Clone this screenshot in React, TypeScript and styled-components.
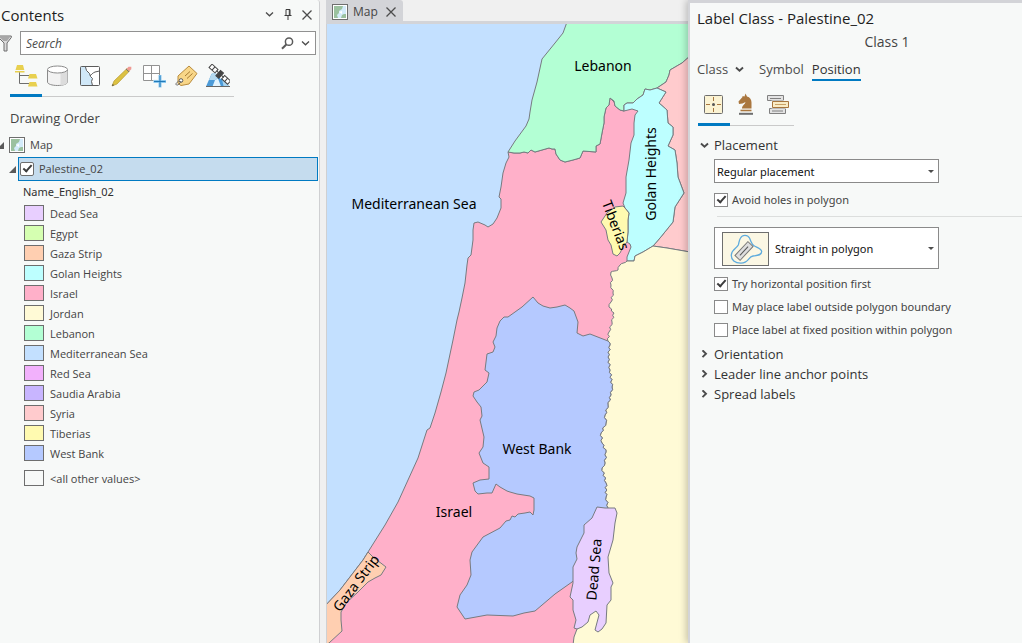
import React from "react";
import styled, { createGlobalStyle } from "styled-components";

const ui = '"Open Sans", "Noto Sans", sans-serif';
const uiWide = '"Noto Sans", "Open Sans", sans-serif';

const GlobalStyle = createGlobalStyle`
  *, *::before, *::after { box-sizing: border-box; }
  body { margin: 0; background: #f0f0f0; color: #444; font-family: ${ui}; font-size: 11px; line-height: 16px; }
  button, input, select { font: inherit; color: inherit; }
  button { margin: 0; padding: 0; border: 0; background: none; }
  svg { display: block; flex: none; }
  ul { margin: 0; padding: 0; list-style: none; }
`;

const Workspace = styled.div`
  display: grid;
  grid-template-columns: 320px minmax(0, 1fr) 334px;
  min-height: 100vh;
`;

/* ---------- contents pane ---------- */

const ContentsPane = styled.aside`
  background: #f7f9f8;
  border-right: 1px solid #cfd0d2;
  border-top-right-radius: 3px;
`;

const PaneHeader = styled.header`
  display: flex;
  align-items: center;
  height: 31px;
  padding: 0 6px 2px 1px;
  gap: 7px;
`;

const PaneTitle = styled.h1`
  flex: 1;
  margin: 0;
  color: #1e1e1e;
  font-size: 15px;
  font-weight: 400;
  line-height: 20px;
`;

const IconButton = styled.button`
  display: grid;
  place-items: center;
  width: 12px;
  height: 20px;
`;

const SearchRow = styled.div`
  display: flex;
  align-items: center;
  gap: 8px;
  padding-right: 3px;
`;

const SearchBox = styled.div`
  display: flex;
  flex: 1;
  align-items: center;
  gap: 6px;
  height: 24px;
  padding: 0 4px 0 5px;
  border: 1px solid #919191;
  background: #fff;
`;

const SearchInput = styled.input`
  flex: 1;
  min-width: 0;
  padding: 1px 0 0;
  border: 0;
  outline: 0;
  background: none;
  font-size: 12px;
  &::placeholder { color: #4c4c4c; font-style: italic; opacity: 1; }
`;

const IconTabs = styled.div<{ $top: number }>`
  display: flex;
  width: max-content;
  margin-top: ${(p) => p.$top}px;
`;

const IconTab = styled.button<{ $active?: boolean }>`
  display: grid;
  place-items: center;
  width: 32px;
  height: 35px;
  padding-bottom: 7px;
  box-shadow: inset 0 ${(p) => (p.$active ? "-3px #007ac2" : "-1px #cacaca")};
`;

const GroupTitle = styled.h2`
  margin: 0;
  padding: 11px 10px 6px;
  font-size: 13px;
  font-weight: 400;
  line-height: 20px;
`;

const TreeRow = styled.div`
  display: flex;
  align-items: center;
  gap: 5px;
  height: 23px;
  padding-bottom: 1px;
`;

const Toggle = styled.button`
  width: 4px;
  height: 12px;
  overflow: hidden;
  display: flex;
  justify-content: flex-end;
  align-items: center;
`;

const LayerRow = styled.div`
  display: flex;
  align-items: center;
  gap: 2px;
  padding: 0 1px 0 9px;
`;

const LayerToggle = styled(Toggle)`
  width: 7px;
`;

const SelectedLayer = styled.label`
  display: flex;
  flex: 1;
  align-items: center;
  gap: 5px;
  height: 24px;
  padding-left: 1px;
  border: 1px solid #007ac2;
  background: #c5dcee;
`;

const Check = styled.input<{ $round?: boolean }>`
  appearance: none;
  flex: none;
  width: 14px;
  height: 14px;
  margin: 0;
  border: 1px solid ${(p) => (p.$round ? "#6e6e6e" : "#8a8a8a")};
  border-radius: ${(p) => (p.$round ? 2 : 0)}px;
  background: #fff;
  &:checked::after {
    content: "";
    display: block;
    width: 9px;
    height: 5px;
    margin: 2px 0 0 2px;
    border: solid #3c3c3c;
    border-width: 0 0 2px 2px;
    transform: rotate(-48deg);
  }
`;

const FieldName = styled.h3`
  margin: 0;
  padding: 3px 23px;
  color: #2f2f2f;
  font-family: ${uiWide};
  font-size: 11px;
  font-weight: 400;
  line-height: 16px;
`;

const Legend = styled.ul`
  padding-left: 24px;
`;

const LegendItem = styled.li<{ $spaced?: boolean }>`
  display: flex;
  align-items: center;
  gap: 6px;
  height: 20px;
  margin-top: ${(p) => (p.$spaced ? 5 : 0)}px;
`;

const LegendName = styled.span`
  padding-top: 2px;
`;

const Swatch = styled.span<{ $color: string }>`
  width: 20px;
  height: 16px;
  border: 1px solid #6e6e6e;
  background: ${(p) => p.$color};
`;

/* ---------- map view ---------- */

const MapView = styled.main`
  display: flex;
  flex-direction: column;
  min-width: 0;
  padding-left: 6px;
`;

const MapTabs = styled.div`
  display: flex;
  height: 24px;
  border-bottom: 3px solid #d3d4d8;
`;

const MapTab = styled.div`
  display: flex;
  align-items: center;
  gap: 5px;
  height: 24px;
  padding: 0 6px;
  border-radius: 0 3px 0 0;
  background: #d3d4d8;
  font-size: 12px;
`;

const TabLabel = styled.span`
  padding-right: 2px;
`;

const MapFrame = styled.div`
  flex: 1;
  border-left: 1px solid #cfd0d2;
  svg { width: 100%; height: 100%; }
`;

/* ---------- label class pane ---------- */

const LabelPane = styled.aside`
  position: relative;
  border-top: 3px solid #d3d4d8;
  border-left: 2px solid #d3d4d8;
  background: #f7f9f8;
  box-shadow: -2px 0 7px rgba(0, 0, 0, 0.22);
`;

const LabelTitle = styled.h1`
  margin: 0;
  padding: 5px 7px 4px;
  color: #1e1e1e;
  font-size: 15px;
  font-weight: 400;
  line-height: 20px;
`;

const ClassName = styled.p`
  margin: 0;
  padding-left: 62px;
  font-size: 14px;
  line-height: 20px;
  text-align: center;
`;

const Tabs = styled.nav`
  display: flex;
  gap: 8px;
  padding: 7px 7px 0;
`;

const Tab = styled.button<{ $active?: boolean }>`
  display: flex;
  align-items: center;
  gap: 7px;
  height: 22px;
  border-bottom: 2px solid ${(p) => (p.$active ? "#007ac2" : "transparent")};
  color: ${(p) => (p.$active ? "#333" : "#4c4c4c")};
  font-size: 13px;
  font-weight: ${(p) => (p.$active ? 500 : 400)};
`;

const TabGroup = styled.div`
  display: flex;
  padding-right: 7px;
`;

const Section = styled.section`
  display: flex;
  flex-direction: column;
  padding-top: 9px;
`;

const SectionButton = styled.button`
  display: flex;
  align-items: center;
  gap: 5px;
  height: 20px;
  padding-left: 10px;
  color: #333;
  font-size: 13px;
  font-weight: 500;
`;

const Fields = styled.div`
  display: flex;
  flex-direction: column;
  padding: 4px 0 3px 24px;
`;

const SelectBox = styled.div<{ $tall?: boolean }>`
  position: relative;
  width: 225px;
  height: ${(p) => (p.$tall ? 42 : 24)}px;
  margin: ${(p) => (p.$tall ? "10px 0 3px" : "0 0 5px")};
`;

const Select = styled.select<{ $inset: number }>`
  appearance: none;
  width: 100%;
  height: 100%;
  padding: 1px 16px 0 ${(p) => p.$inset}px;
  border: 1px solid #8a8a8a;
  border-radius: 0;
  background: #fff;
  color: #111;
  font-family: ${uiWide};
  font-size: 11px;
`;

const Caret = styled.span`
  position: absolute;
  top: 50%;
  right: 5px;
  margin-top: -1px;
  border: solid transparent;
  border-width: 3px 3px 0;
  border-top-color: #4c4c4c;
  pointer-events: none;
`;

const Preview = styled.span`
  position: absolute;
  top: 5px;
  left: 8px;
  pointer-events: none;
`;

const Option = styled.label`
  display: flex;
  align-items: center;
  gap: 4px;
  height: 23px;
  font-family: ${uiWide};
`;

const Rule = styled.hr`
  width: calc(100% - 3px);
  margin: 5px 0 0 3px;
  border: 0;
  border-top: 1px solid #dcdedd;
`;

/* ---------- icons ---------- */

const CloseIcon = () => (
  <svg width="10" height="10" viewBox="0 0 10 10" stroke="#4c4c4c" strokeWidth="1.3">
    <path d="M.5.5l9 9M9.5.5l-9 9" />
  </svg>
);

const Chevron = ({ right, bold }: { right?: boolean; bold?: boolean }) => (
  <svg width="9" height="9" viewBox="0 0 9 9" fill="none" stroke="#4c4c4c" strokeWidth={bold ? 1.9 : 1.3}>
    <path d={right ? "M2.5.3L6 3.7 2.5 7.1" : "M1 2.5l3.5 3.3L8 2.5"} />
  </svg>
);

const Triangle = () => (
  <svg width="7" height="7" viewBox="0 0 7 7" fill="#5a5a5a">
    <path d="M7 0v7H0z" />
  </svg>
);

const MapIcon = () => (
  <svg width="16" height="16" viewBox="0 0 16 16">
    <rect x=".5" y=".5" width="15" height="15" fill="#fff" stroke="#6e6e6e" />
    <rect x="2" y="2" width="12" height="12" fill="#9bc19f" />
    <path d="M11 2h3v8h-2l-2 1-1 3H6l-1-3 2-2V7l3-2z" fill="#d3ebfa" />
    <path d="M7 8l3-1v3z" fill="#fff" />
  </svg>
);

const FilterIcon = () => (
  <svg width="12" height="17" viewBox="0 0 12 17">
    <path d="M-2 1h13.300v1.500L7 8v8H4V8L-1.500 2.500z" fill="#dcdcdc" stroke="#6e6e6e" />
    <path d="M-1 1.500h11.500L7 6H3.500z" fill="#a8a8a8" />
  </svg>
);

const SearchIcon = () => (
  <svg width="13" height="13" viewBox="0 0 13 13" fill="none" stroke="#5a5a5a">
    <circle cx="8" cy="4.700" r="3.600" strokeWidth="1.500" />
    <path d="M5.300 7.500L1 11.800" strokeWidth="2" />
  </svg>
);

const PinIcon = () => (
  <svg width="8" height="11" viewBox="0 0 8 11" fill="none" stroke="#3c3c3c">
    <path d="M2 6V.5h4V6M.5 6.500h7M4 7v4M5.300 1v5" />
  </svg>
);

const listIcons = [
  {
    name: "List by drawing order",
    art: (
      <>
        <path d="M5.500 8v11.500H15M5.500 11.500H15" fill="none" stroke="#6e6e6e" />
        <g fill="#e8d04f">
          <path d="M3 1h6l1.300 5H1.500zM1 7h9.500v1.500H1z" />
          <path d="M15.500 10h6.500l1.500 4.500H14zM15.500 18h6.500l1.500 4.500H14z" />
        </g>
      </>
    ),
  },
  {
    name: "List by data source",
    art: (
      <g stroke="#8a8a8a">
        <path d="M1.500 6v12c0 2 4.500 3.500 10 3.500s10-1.500 10-3.500V6" fill="#f2f2f2" />
        <path d="M14.500 9c4-.5 7-1.500 7-3v12c0 2-3 3-7 3.500z" fill="#dcdcdc" stroke="none" />
        <ellipse cx="11.500" cy="5.500" rx="10" ry="3.500" fill="#fff" />
      </g>
    ),
  },
  {
    name: "List by selection",
    art: (
      <>
        <rect x="2.500" y="2.500" width="19" height="19" fill="#fff" />
        <path d="M2.500 2.500h5l1 4 3 3 1 3 2 2-1 3 1 4h-12z" fill="#d0e8f8" />
        <path d="M7.500 3l1 3.500 3 3 1 3 2 2-1 3 1 4M12 12c1.500-1.500 2.500-3 5-4l4.500-1" fill="none" stroke="#5c5c5c" />
        <rect x="2.500" y="2.500" width="19" height="19" rx="1" fill="none" stroke="#5c5c5c" />
      </>
    ),
  },
  {
    name: "List by editing",
    art: (
      <>
        <path d="M2 22l2-5L17 4.500l2.500 2.500L7 20z" fill="#dcc242" stroke="#b79a31" strokeWidth=".7" />
        <path d="M16.500 5l2-2.300h2.800v2.500L19.500 7z" fill="#ef9a94" />
        <path d="M16 5l3 3" stroke="#777" />
        <path d="M2 22l.8-2 1.200 1.200z" fill="#444" />
      </>
    ),
  },
  {
    name: "List by snapping",
    art: (
      <>
        <path d="M1.500 1.500h16v15h-16zM9.500 1.500v15M1.500 9.500h16" fill="#fff" stroke="#929292" />
        <path d="M18 11v12.500M11.500 17.500H24" stroke="#f7f9f8" strokeWidth="5" />
        <path d="M18 11v12.500M11.500 17.500H24" stroke="#8ecaf0" strokeWidth="3" />
        <path d="M18 11.500v11.500M12 17.500H23.500" stroke="#2079b8" />
      </>
    ),
  },
  {
    name: "List by labeling",
    art: (
      <>
        <path d="M4 12L15 2l8 7.500-8 10.500-8 1.500-3-2z" fill="#f8d688" stroke="#b98c3d" />
        <path d="M11 12l5-4.500M13 14.500l5.500-5" stroke="#a77b32" />
        <circle cx="7" cy="16.500" r="1.800" fill="#fff" stroke="#5a5a5a" />
        <path d="M7 17c-1 3-3.500 4.500-4.500 4-1.500-1 .5-3 2-3.500" fill="none" stroke="#666" />
      </>
    ),
  },
  {
    name: "List by charts",
    art: (
      <>
        <path d="M0 22.500L5.500 10h5l4 5 4-2 4.500 9.500z" fill="#4c9bd8" />
        <path d="M3 16l3-7h4l2 5-3 2z" fill="#b5d9ef" />
        <path d="M9 16l3-1.500 3 8H6.500z" fill="#e2f3fd" />
        <path d="M16 15l4 0 2.500 7h-5z" fill="#a8d5f2" />
        <path d="M0 22.500h24" stroke="#666" />
        <g transform="rotate(42 14 10)" fill="#fff" stroke="#444">
          <rect x="1.500" y="8" width="8" height="4.500" />
          <path d="M5.500 8v4.500" />
          <rect x="12" y="7" width="4" height="7" fill="#444" />
          <rect x="18.500" y="8" width="8" height="4.500" />
          <path d="M22.500 8v4.500M9.500 10h3M16 10h3" />
        </g>
      </>
    ),
  },
];

const positionIcons = [
  {
    name: "Position",
    art: (
      <>
        <rect x="2.500" y="2.500" width="18" height="18" rx="1" fill="#fbf3d3" stroke="#6e6e6e" />
        <path d="M11.500 4v4M11.500 15v4M4 11.500h4M15 11.500h4" stroke="#a8763e" />
        <circle cx="11.500" cy="11.500" r="1.500" fill="#555" />
      </>
    ),
  },
  {
    name: "Fitting strategy",
    art: (
      <>
        <path d="M8 15.500c0-3 3-4 3.500-6.500L8.500 10.500 5 11 4.500 8.500 8.500 4V3l2 .6L11.500.5l1.500 3c3 .8 4.500 3 4.500 6v6z" fill="#aa773f" />
        <path d="M6.500 17.500h11" stroke="#aa773f" strokeWidth="1.600" />
        <path d="M5 20.800h14" stroke="#6e6e6e" strokeWidth="2" />
      </>
    ),
  },
  {
    name: "Conflict resolution",
    art: (
      <>
        <path d="M1.500 2.500h16v5h-16zM3.500 15.500h16v5h-16z" fill="#e3e3e3" stroke="#808080" />
        <path d="M4 5.500h11M6 18h11" stroke="#808080" />
        <path d="M5.500 7.500h18v8h-18z" fill="#f7f9f8" />
        <path d="M6.500 8.500h16v6h-16z" fill="#faecc6" stroke="#a8763e" />
        <path d="M9 11.500h11" stroke="#c9a266" />
      </>
    ),
  },
];

const PolygonPreview = () => (
  <svg width="47" height="34" viewBox="0 0 47 34">
    <rect x=".5" y=".5" width="46" height="33" fill="#fbf7e4" stroke="#6e6e6e" />
    <path
      d="M18.500 6c2-3.500 7-3.500 9 0 2 4 1.500 6 5 8 3 1.600 7 2.500 7.200 5.500.1 4-4.700 4-8.700 4.500-5 .7-4 7-12 7.200-6 .1-10-3.200-9.700-8.200.4-6 5.500-6.500 7-10 .9-2.500.7-4.700 2.200-7z"
      fill="none" stroke="#5eabdd" strokeWidth="1.300"
    />
    <g transform="rotate(-47 22 19)" fill="none" stroke="#777">
      <rect x="12.500" y="15.500" width="19" height="7" fill="#dedede" />
      <path d="M16 19h12" stroke="#555" />
    </g>
  </svg>
);

/* ---------- map geometry ---------- */

type Pt = [number, number];

// Breaks each stretch of a winding border into short alternating bends.
const meander = (pts: Pt[]): Pt[] =>
  pts.flatMap((p, i): Pt[] => {
    const q = pts[i + 1];
    if (!q) return [p];
    const steps = Math.max(1, Math.round(Math.hypot(q[0] - p[0], q[1] - p[1]) / 2.5));
    return Array.from({ length: steps }, (_, k): Pt => {
      const t = k / steps;
      const bend = k === 0 ? 0 : ((k + i) % 2 ? 1 : -1) * 0.9;
      return [p[0] + (q[0] - p[0]) * t + bend, p[1] + (q[1] - p[1]) * t];
    });
  });

const coast: Pt[] = [
  [508, 152], [509, 157], [506, 163], [503, 173], [501, 187], [499, 197], [501, 199], [501, 208], [497, 218], [493, 224],
  [488, 227], [485, 225], [478, 222], [474, 223], [473, 230], [473, 240], [471, 255], [468, 258], [467, 265], [465, 283],
  [462, 298], [459, 312], [457, 320], [453, 340], [446, 373], [441, 392], [435, 413], [430, 428], [427, 430], [418, 458],
  [408, 480], [398, 502], [385, 525], [368, 552], [363, 560], [340, 590], [326, 605],
];

const lebanonSouth: Pt[] = [
  [508, 152], [514, 153], [520, 153], [524, 152], [528, 153], [531, 150], [535, 152], [542, 150], [549, 148], [552, 149],
  [555, 149], [556, 154], [560, 160], [565, 162], [573, 160], [580, 158], [583, 151], [596, 152], [596, 146], [600, 144],
  [602, 133], [604, 123], [604, 117], [606, 108], [609, 105], [610, 98], [614, 101], [615, 106], [620, 110], [624, 111],
];

const golanNorth: Pt[] = [[624, 111], [624, 105], [627, 103], [633, 103], [637, 99], [643, 95], [645, 89], [650, 90], [657, 88]];
const syriaNorth: Pt[] = [[657, 88], [666, 82], [669, 75], [670, 70], [682, 63], [690, 56]];

const golanEast: Pt[] = [
  [657, 88], [666, 92], [659, 103], [667, 110], [668, 123], [673, 127], [673, 135], [668, 146], [675, 150], [677, 163],
  [678, 177], [681, 185], [684, 193], [675, 207], [673, 222], [660, 238], [653, 246],
];

const golanWest: Pt[] = [
  [631, 247], [630, 244], [627, 242], [628, 232], [628, 220], [629, 213], [625, 208], [623, 203], [626, 193], [626, 177],
  [629, 160], [631, 143], [634, 135], [634, 123], [635, 115], [638, 111], [632, 109], [624, 111],
];

const yarmouk: Pt[] = [[653, 246], [648, 249], [643, 252], [635, 256], [634, 261], [627, 261]];

const riverNorth = meander([
  [627, 261], [620, 265], [618, 270], [611, 272], [612, 278], [611, 285], [613, 293], [611, 302], [609, 307], [614, 313],
  [612, 322], [609, 332], [608, 341],
]);

const riverSouth = meander([
  [608, 341], [610, 345], [608, 357], [610, 370], [612, 387], [611, 395], [608, 405], [605, 415], [606, 423], [601, 433],
  [602, 443], [606, 452], [605, 463], [602, 468], [606, 483], [606, 497], [608, 508],
]);

const westBank: Pt[] = [
  [533, 297], [538, 303], [543, 306], [550, 308], [557, 307], [565, 305], [570, 308], [574, 311], [578, 322], [577, 333],
  [583, 336], [590, 334], ...riverSouth, [590, 535], [580, 575], [572, 582], [555, 594], [535, 611], [524, 613], [513, 616],
  [487, 615], [465, 619], [457, 607], [460, 595], [467, 585], [471, 575], [470, 560], [472, 552], [483, 537], [500, 528],
  [506, 521], [510, 520], [512, 516], [515, 517], [518, 514], [525, 513], [530, 512], [533, 515], [534, 510], [534, 498],
  [530, 496], [517, 494], [510, 492], [507, 491], [500, 487], [496, 484], [492, 493], [487, 493], [478, 494], [475, 491],
  [473, 483], [480, 480], [489, 479], [489, 467], [483, 463], [479, 453], [483, 447], [484, 437], [480, 420], [482, 416],
  [481, 407], [477, 402], [473, 396], [474, 392], [479, 390], [487, 382], [489, 373], [485, 370], [487, 354], [493, 352],
  [495, 347], [493, 342], [496, 336], [497, 328], [500, 321], [504, 317], [508, 317], [522, 307],
];

const deadSea: Pt[] = [
  [597, 507], [605, 508], [615, 508], [617, 513], [615, 523], [613, 540], [608, 557], [609, 573], [613, 583], [611, 587],
  [611, 600], [607, 605], [606, 623], [602, 629], [598, 632], [595, 630], [599, 615], [596, 611], [590, 615], [588, 622],
  [582, 627], [577, 629], [574, 628], [576, 620], [573, 610], [573, 600], [570, 597], [573, 583], [573, 567], [577, 559],
  [576, 553], [577, 547], [584, 533], [584, 525], [592, 518],
];

const regions: { name: string; color: string; pts: Pt[] }[] = [
  { name: "Israel", color: "#ffb0c9", pts: [...coast, [326, 645], [640, 645], [640, 100], [624, 111], [610, 98], ...[...lebanonSouth].reverse()] },
  {
    name: "Lebanon",
    color: "#b3ffd4",
    pts: [
      [567, 22], [563, 33], [555, 43], [542, 59], [537, 82], [532, 100], [530, 112], [529, 119], [526, 126], [515, 141],
      ...lebanonSouth, ...golanNorth, ...syriaNorth, [690, 22],
    ],
  },
  { name: "Syria", color: "#ffcbcd", pts: [...syriaNorth, [690, 252], [667, 248], ...[...golanEast].reverse()] },
  { name: "Golan Heights", color: "#bdffff", pts: [...golanNorth, ...golanEast, ...yarmouk, [627, 257], ...golanWest] },
  {
    name: "Jordan",
    color: "#fffad6",
    pts: [...yarmouk, ...riverNorth, ...riverSouth, [592, 560], [582, 625], [577, 629], [574, 637], [573, 645], [690, 645], [690, 252], [667, 248]],
  },
  { name: "West Bank", color: "#b5c9ff", pts: westBank },
  {
    name: "Tiberias",
    color: "#fffab0",
    pts: [
      [623, 206], [615, 207], [607, 213], [601, 222], [606, 230], [608, 240], [611, 245], [613, 254], [617, 256], [620, 253],
      [623, 247], [627, 242], [628, 232], [628, 220], [629, 213], [625, 208],
    ],
  },
  {
    name: "Gaza Strip",
    color: "#ffcfb1",
    pts: [
      [368, 552], [373, 557], [386, 567], [381, 575], [375, 578], [368, 582], [357, 593], [347, 602], [341, 612], [341, 620],
      [342, 631], [329, 643], [324, 646], [324, 607], [340, 590], [363, 560],
    ],
  },
  { name: "Dead Sea", color: "#e8cfff", pts: deadSea },
];

const mapLabels = [
  { text: "Mediterranean Sea", x: 414, y: 209, turn: 0 },
  { text: "Lebanon", x: 603, y: 71, turn: 0 },
  { text: "Israel", x: 454, y: 517, turn: 0 },
  { text: "West Bank", x: 537, y: 454, turn: 0 },
  { text: "Golan Heights", x: 656, y: 174, turn: -90 },
  { text: "Dead Sea", x: 599, y: 570, turn: -85 },
  { text: "Tiberias", x: 611, y: 227, turn: 69 },
  { text: "Gaza Strip", x: 360, y: 586, turn: -53 },
];

const MapDrawing = () => (
  <svg viewBox="327 24 361 619" preserveAspectRatio="xMidYMid slice" role="img" aria-label="Map">
    <rect x="-673" y="-976" width="2361" height="2619" fill="#c3e0ff" />
    <g stroke="#777b80" strokeWidth="1" strokeLinejoin="round">
      {regions.map((r) => (
        <polygon key={r.name} points={r.pts.map((p) => p.join(",")).join(" ")} fill={r.color} />
      ))}
    </g>
    <g fill="#000" fontFamily='"Noto Sans", sans-serif' fontSize="14" textAnchor="middle">
      {mapLabels.map((l) => (
        <text key={l.text} x={l.x} y={l.y} transform={`rotate(${l.turn} ${l.x} ${l.y})`}>{l.text}</text>
      ))}
    </g>
  </svg>
);

/* ---------- data ---------- */

const legend = [
  ["Dead Sea", "#e8cfff"], ["Egypt", "#d5ffb1"], ["Gaza Strip", "#ffcfb1"], ["Golan Heights", "#bdffff"],
  ["Israel", "#ffb0c9"], ["Jordan", "#fffad6"], ["Lebanon", "#b3ffd4"], ["Mediterranean Sea", "#c3e0ff"],
  ["Red Sea", "#f2b1fc"], ["Saudia Arabia", "#c8b5ff"], ["Syria", "#ffcbcd"], ["Tiberias", "#fffab0"],
  ["West Bank", "#b5c9ff"], ["<all other values>", "transparent"],
];

const Indent = styled.div<{ $left: number }>`
  padding-left: ${(p) => p.$left}px;
`;

export default function App() {
  return (
    <>
      <GlobalStyle />
      <Workspace>
        <ContentsPane>
          <PaneHeader>
            <PaneTitle>Contents</PaneTitle>
            <IconButton aria-label="Pane options"><Chevron /></IconButton>
            <IconButton aria-label="Pin"><PinIcon /></IconButton>
            <IconButton aria-label="Close"><CloseIcon /></IconButton>
          </PaneHeader>
          <SearchRow>
            <FilterIcon />
            <SearchBox>
              <SearchInput type="search" placeholder="Search" aria-label="Search" />
              <IconButton aria-label="Run search"><SearchIcon /></IconButton>
              <IconButton aria-label="Search options"><Chevron /></IconButton>
            </SearchBox>
          </SearchRow>
          <Indent $left={10}>
            <IconTabs $top={7}>
              {listIcons.map((icon, i) => (
                <IconTab key={icon.name} $active={i === 0} aria-label={icon.name}>
                  <svg width="24" height="24" viewBox="0 0 24 24">{icon.art}</svg>
                </IconTab>
              ))}
            </IconTabs>
          </Indent>
          <GroupTitle>Drawing Order</GroupTitle>
          <TreeRow>
            <Toggle aria-label="Collapse Map"><Triangle /></Toggle>
            <MapIcon />
            Map
          </TreeRow>
          <LayerRow>
            <LayerToggle aria-label="Collapse layer"><Triangle /></LayerToggle>
            <SelectedLayer>
              <Check type="checkbox" defaultChecked $round />
              Palestine_02
            </SelectedLayer>
          </LayerRow>
          <FieldName>Name_English_02</FieldName>
          <Legend>
            {legend.map(([name, color], i) => (
              <LegendItem key={name} $spaced={i === legend.length - 1}>
                <Swatch $color={color} />
                <LegendName>{name}</LegendName>
              </LegendItem>
            ))}
          </Legend>
        </ContentsPane>

        <MapView>
          <MapTabs>
            <MapTab>
              <MapIcon />
              <TabLabel>Map</TabLabel>
              <IconButton aria-label="Close map"><CloseIcon /></IconButton>
            </MapTab>
          </MapTabs>
          <MapFrame><MapDrawing /></MapFrame>
        </MapView>

        <LabelPane>
          <LabelTitle>Label Class - Palestine_02</LabelTitle>
          <ClassName>Class 1</ClassName>
          <Tabs>
            <TabGroup><Tab>Class <Chevron bold /></Tab></TabGroup>
            <Tab>Symbol</Tab>
            <Tab $active>Position</Tab>
          </Tabs>
          <Indent $left={8}>
            <IconTabs $top={10}>
              {positionIcons.map((icon, i) => (
                <IconTab key={icon.name} $active={i === 0} aria-label={icon.name}>
                  <svg width="24" height="24" viewBox="0 0 24 24">{icon.art}</svg>
                </IconTab>
              ))}
            </IconTabs>
          </Indent>
          <Section>
            <SectionButton aria-expanded="true"><Chevron bold />Placement</SectionButton>
            <Fields>
              <SelectBox>
                <Select $inset={2} aria-label="Placement type">
                  <option>Regular placement</option>
                </Select>
                <Caret />
              </SelectBox>
              <Option><Check type="checkbox" defaultChecked />Avoid holes in polygon</Option>
              <Rule />
              <SelectBox $tall>
                <Select $inset={60} aria-label="Polygon placement">
                  <option>Straight in polygon</option>
                </Select>
                <Preview><PolygonPreview /></Preview>
                <Caret />
              </SelectBox>
              <Option><Check type="checkbox" defaultChecked />Try horizontal position first</Option>
              <Option><Check type="checkbox" />May place label outside polygon boundary</Option>
              <Option><Check type="checkbox" />Place label at fixed position within polygon</Option>
            </Fields>
            <SectionButton aria-expanded="false"><Chevron right bold />Orientation</SectionButton>
            <SectionButton aria-expanded="false"><Chevron right bold />Leader line anchor points</SectionButton>
            <SectionButton aria-expanded="false"><Chevron right bold />Spread labels</SectionButton>
          </Section>
        </LabelPane>
      </Workspace>
    </>
  );
}
